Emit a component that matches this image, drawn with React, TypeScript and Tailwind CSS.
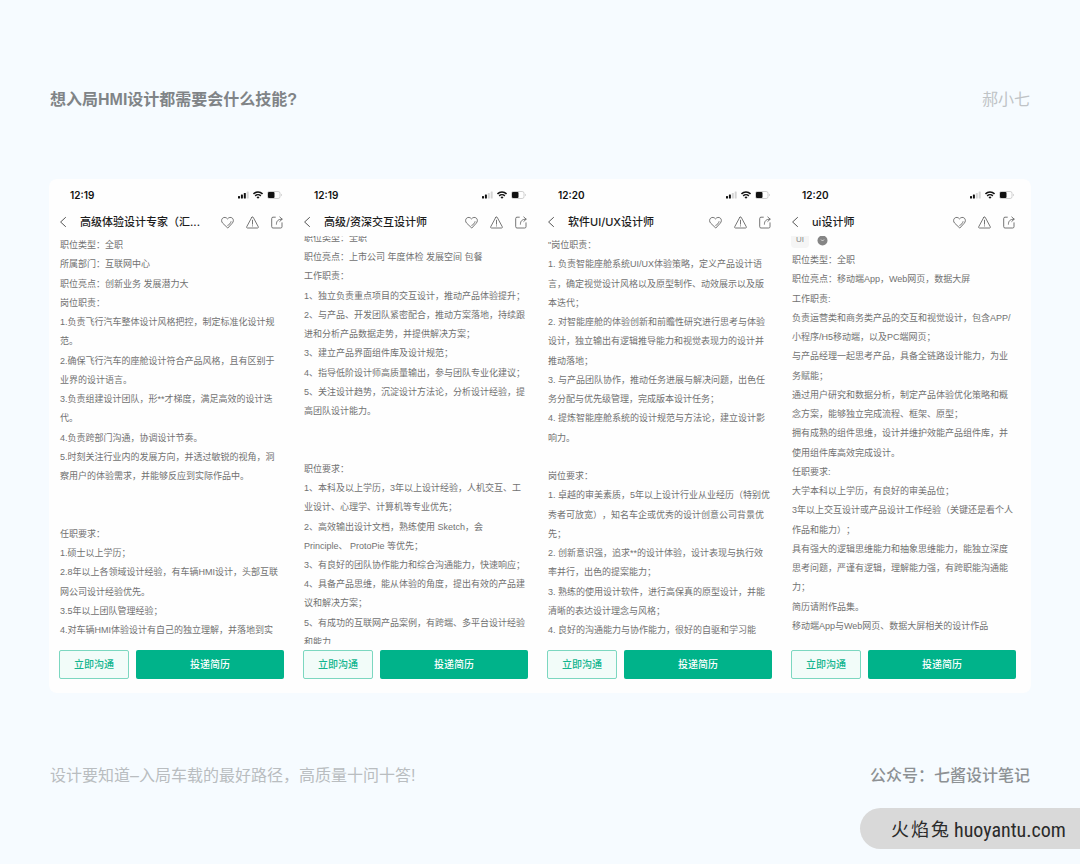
import { FC } from "react";

type Screen = {
  time: string;
  signal: number;
  title: string;
  tags?: boolean;
  inset: string;
  lines: string[];
};

const screens: Screen[] = [
  {
    time: "12:19",
    signal: 3,
    title: "高级体验设计专家（汇...",
    inset: "mb-1",
    lines: [
      "职位类型：全职",
      "所属部门：互联网中心",
      "职位亮点：创新业务 发展潜力大",
      "岗位职责：",
      "1.负责飞行汽车整体设计风格把控，制定标准化设计规",
      "范。",
      "2.确保飞行汽车的座舱设计符合产品风格，且有区别于",
      "业界的设计语言。",
      "3.负责组建设计团队，形**才梯度，满足高效的设计迭",
      "代。",
      "4.负责跨部门沟通，协调设计节奏。",
      "5.时刻关注行业内的发展方向，并透过敏锐的视角，洞",
      "察用户的体验需求，并能够反应到实际作品中。",
      "",
      "",
      "任职要求：",
      "1.硕士以上学历；",
      "2.8年以上各领域设计经验，有车辆HMI设计，头部互联",
      "网公司设计经验优先。",
      "3.5年以上团队管理经验；",
      "4.对车辆HMI体验设计有自己的独立理解，并落地到实",
    ],
  },
  {
    time: "12:19",
    signal: 2,
    title: "高级/资深交互设计师",
    inset: "-mt-[7px] -mb-2",
    lines: [
      "职位类型：全职",
      "职位亮点：上市公司 年度体检 发展空间 包餐",
      "工作职责：",
      "1、独立负责重点项目的交互设计，推动产品体验提升；",
      "2、与产品、开发团队紧密配合，推动方案落地，持续跟",
      "进和分析产品数据走势，并提供解决方案；",
      "3、建立产品界面组件库及设计规范；",
      "4、指导低阶设计师高质量输出，参与团队专业化建议；",
      "5、关注设计趋势，沉淀设计方法论，分析设计经验，提",
      "高团队设计能力。",
      "",
      "",
      "职位要求：",
      "1、本科及以上学历，3年以上设计经验，人机交互、工",
      "业设计、心理学、计算机等专业优先；",
      "2、高效输出设计文档，熟练使用 Sketch，会",
      "Principle、 ProtoPie 等优先；",
      "3、有良好的团队协作能力和综合沟通能力，快速响应；",
      "4、具备产品思维，能从体验的角度，提出有效的产品建",
      "议和解决方案；",
      "5、有成功的互联网产品案例，有跨端、多平台设计经验",
      "和能力",
    ],
  },
  {
    time: "12:20",
    signal: 2,
    title: "软件UI/UX设计师",
    inset: "mb-1",
    lines: [
      "\"岗位职责：",
      "1. 负责智能座舱系统UI/UX体验策略，定义产品设计语",
      "言，确定视觉设计风格以及原型制作、动效展示以及版",
      "本迭代；",
      "2. 对智能座舱的体验创新和前瞻性研究进行思考与体验",
      "设计，独立输出有逻辑推导能力和视觉表现力的设计并",
      "推动落地；",
      "3. 与产品团队协作，推动任务进展与解决问题，出色任",
      "务分配与优先级管理，完成版本设计任务；",
      "4. 提炼智能座舱系统的设计规范与方法论，建立设计影",
      "响力。",
      "",
      "岗位要求：",
      "1. 卓越的审美素质，5年以上设计行业从业经历（特别优",
      "秀者可放宽），知名车企或优秀的设计创意公司背景优",
      "先；",
      "2. 创新意识强，追求**的设计体验，设计表现与执行效",
      "率并行，出色的提案能力；",
      "3. 熟练的使用设计软件，进行高保真的原型设计，并能",
      "清晰的表达设计理念与风格；",
      "4. 良好的沟通能力与协作能力，很好的自驱和学习能",
    ],
  },
  {
    time: "12:20",
    signal: 2,
    title: "ui设计师",
    tags: true,
    inset: "mb-2",
    lines: [
      "职位类型：全职",
      "职位亮点：移动端App，Web网页，数据大屏",
      "工作职责:",
      "负责运营类和商务类产品的交互和视觉设计，包含APP/",
      "小程序/H5移动端，以及PC端网页；",
      "与产品经理一起思考产品，具备全链路设计能力，为业",
      "务赋能；",
      "通过用户研究和数据分析，制定产品体验优化策略和概",
      "念方案，能够独立完成流程、框架、原型；",
      "拥有成熟的组件思维，设计并维护效能产品组件库，并",
      "使用组件库高效完成设计。",
      "任职要求:",
      "大学本科以上学历，有良好的审美品位；",
      "3年以上交互设计或产品设计工作经验（关键还是看个人",
      "作品和能力）；",
      "具有强大的逻辑思维能力和抽象思维能力，能独立深度",
      "思考问题，严谨有逻辑，理解能力强，有跨职能沟通能",
      "力；",
      "简历请附作品集。",
      "移动端App与Web网页、数据大屏相关的设计作品",
    ],
  },
];

const StatusIcons: FC<{ signal: number }> = ({ signal }) => (
  <div className="flex items-center gap-1">
    <svg width="11" height="8" viewBox="0 0 11 8">
      {[0, 1, 2, 3].map((i) => (
        <rect
          key={i}
          x={i * 2.9}
          y={5 - i * 1.5}
          width="2"
          height={2.5 + i * 1.5}
          rx="0.5"
          fill={i < signal ? "#111" : "#d4d4d4"}
        />
      ))}
    </svg>
    <svg width="10" height="8" viewBox="0 0 10 8" fill="none" stroke="#111" strokeWidth="1.5">
      <path d="M0.5 2.9a6.4 6.4 0 0 1 9 0" />
      <path d="M2.2 4.9a4 4 0 0 1 5.6 0" />
      <path d="M5 7.8 3.5 6.2a2.1 2.1 0 0 1 3 0z" fill="#111" stroke="none" />
    </svg>
    <svg width="15" height="8" viewBox="0 0 15 8">
      <rect x="0.5" y="0.5" width="12.5" height="7" rx="1.8" fill="none" stroke="#c4c4c4" strokeWidth="0.8" />
      <rect x="1" y="1" width="6.5" height="6" rx="1" fill="#111" />
      <path d="M14 2.8v2.4q.8-.5.8-1.2t-.8-1.2z" fill="#c4c4c4" />
    </svg>
  </div>
);

const NavBar: FC<{ title: string }> = ({ title }) => (
  <div className="flex items-center h-[26px] mt-1.5">
    <button aria-label="返回" className="w-[21px] shrink-0">
      <svg width="9" height="12" viewBox="0 0 9 12" fill="none" stroke="#555" strokeWidth="1">
        <path d="M6.8 1.2 1.6 6l5.2 4.8" />
      </svg>
    </button>
    <h2 className="flex-1 font-['Inter','Noto_Sans_CJK_SC',sans-serif] text-[11px] leading-4 font-medium text-[#1c1c1c] whitespace-nowrap">
      {title}
    </h2>
    <div className="flex items-center gap-3 pr-px">
      <button aria-label="收藏">
        <svg width="13" height="13" viewBox="0 0 13 13" fill="none" stroke="#666" strokeWidth="0.9" strokeLinecap="round" strokeLinejoin="round">
          <path d="M6.5 11.8 1.7 7.2C.2 5.7.3 3.4 1.6 2.2c1.4-1.3 3.6-1 4.9.7 1.3-1.7 3.5-2 4.9-.7 1.3 1.2 1.4 3.5-.1 5z" />
          <path d="M6.8 9.3c1.7-.7 2.8-2 3.2-3.6" />
        </svg>
      </button>
      <button aria-label="举报">
        <svg width="13" height="13" viewBox="0 0 13 13" fill="none" stroke="#666" strokeWidth="0.9" strokeLinecap="round" strokeLinejoin="round">
          <path d="M5.8 1.3.7 10.8c-.3.6 0 1.2.7 1.2h10.2c.7 0 1-.6.7-1.2L7.2 1.3c-.3-.6-1.1-.6-1.4 0z" />
          <path d="M6.5 4.2v4M6.5 9.8v.2" />
        </svg>
      </button>
      <button aria-label="分享">
        <svg width="12" height="13" viewBox="0 0 12 13" fill="none" stroke="#666" strokeWidth="0.9" strokeLinecap="round" strokeLinejoin="round">
          <path d="M4.3 1.2H2A1.3 1.3 0 0 0 .7 2.5v8.2A1.3 1.3 0 0 0 2 12h7.7a1.3 1.3 0 0 0 1.3-1.3V6.8" />
          <path d="M5.4 8.2c0-3.4 1.8-5 5.6-5M8.8 1 11.2 3.2 8.8 5.4" />
        </svg>
      </button>
    </div>
  </div>
);

const PhoneScreen: FC<{ screen: Screen }> = ({ screen }) => {
  return (
    <article className="flex flex-col min-w-0">
      <div className="flex items-center justify-between h-4 pl-[11px] pr-0.5">
        <span className="font-['Inter','Liberation_Sans',sans-serif] text-[10px] leading-4 font-semibold text-[#111]">
          {screen.time}
        </span>
        <StatusIcons signal={screen.signal} />
      </div>
      <NavBar title={screen.title} />
      <div className="flex flex-col h-[408px] mt-px overflow-hidden">
        {screen.tags && (
          <div className="flex items-center gap-2 h-[22px] -mt-[7px] shrink-0 text-[8px] leading-4 text-[#888]">
            <span className="w-[18px] rounded-sm bg-[#f5f5f5] text-center">UI</span>
            <svg width="11" height="11" viewBox="0 0 11 11">
              <circle cx="5.5" cy="5.5" r="5" fill="#858585" />
              <path d="M4 4.5 5.5 6 7 4.5" fill="none" stroke="#e5e5e5" strokeWidth="0.9" />
            </svg>
          </div>
        )}
        <div className={`flex flex-1 flex-col justify-between pl-px text-[9px] leading-[19px] text-[#717171] whitespace-nowrap ${screen.inset}`}>
          {screen.lines.map((line, i) => (
            <p key={i} className="min-h-[19px]">
              {line}
            </p>
          ))}
        </div>
      </div>
      <div className="flex gap-[7px] mt-1.5 h-[29px] text-[10px] leading-4 font-medium">
        <button className="w-[70px] rounded-xs border border-[#7cd7c0] bg-[#f2fcf9] text-[#12b58e]">立即沟通</button>
        <button className="flex-1 rounded-xs bg-[#00b38a] text-white">投递简历</button>
      </div>
    </article>
  );
};

export default function App() {
  return (
    <div
      lang="zh-CN"
      className="flex flex-col min-h-screen bg-[#f6fbff] pt-[88px] font-['Liberation_Sans','Noto_Sans_CJK_SC',sans-serif] [text-spacing-trim:space-all]"
    >
      <header className="flex items-center justify-between px-[50px] text-base leading-6">
        <h1 className="font-bold text-[#808487]">想入局HMI设计都需要会什么技能?</h1>
        <span className="text-[#bfc3c6]">郝小七</span>
      </header>
      <main className="grid grid-cols-4 gap-[19px] mx-[49px] mt-[67px] pt-2 pb-3.5 pl-2.5 pr-[15px] rounded-lg bg-[#fefefe]">
        {screens.map((screen, i) => (
          <PhoneScreen key={i} screen={screen} />
        ))}
      </main>
      <footer className="mt-[71px]">
        <div className="flex items-center justify-between px-[50px] text-base leading-6">
          <p className="text-[#b9bdc0]">设计要知道–入局车载的最好路径，高质量十问十答!</p>
          <p className="font-medium text-[#8d9194]">公众号：七酱设计笔记</p>
        </div>
        <div className="flex items-center w-[220px] h-[41px] mt-5 ml-auto pt-0.5 pl-[31px] rounded-l-full bg-[#d9d9d9] text-[#2b2b2b] whitespace-nowrap">
          <span className="flex gap-0.5 w-[63px] shrink-0 text-lg leading-6">
            <span>火</span>
            <span>焰</span>
            <span>兔</span>
          </span>
          <span className="font-['Roboto_Condensed','Roboto',sans-serif] text-xl leading-6">huoyantu.com</span>
        </div>
      </footer>
    </div>
  );
}
